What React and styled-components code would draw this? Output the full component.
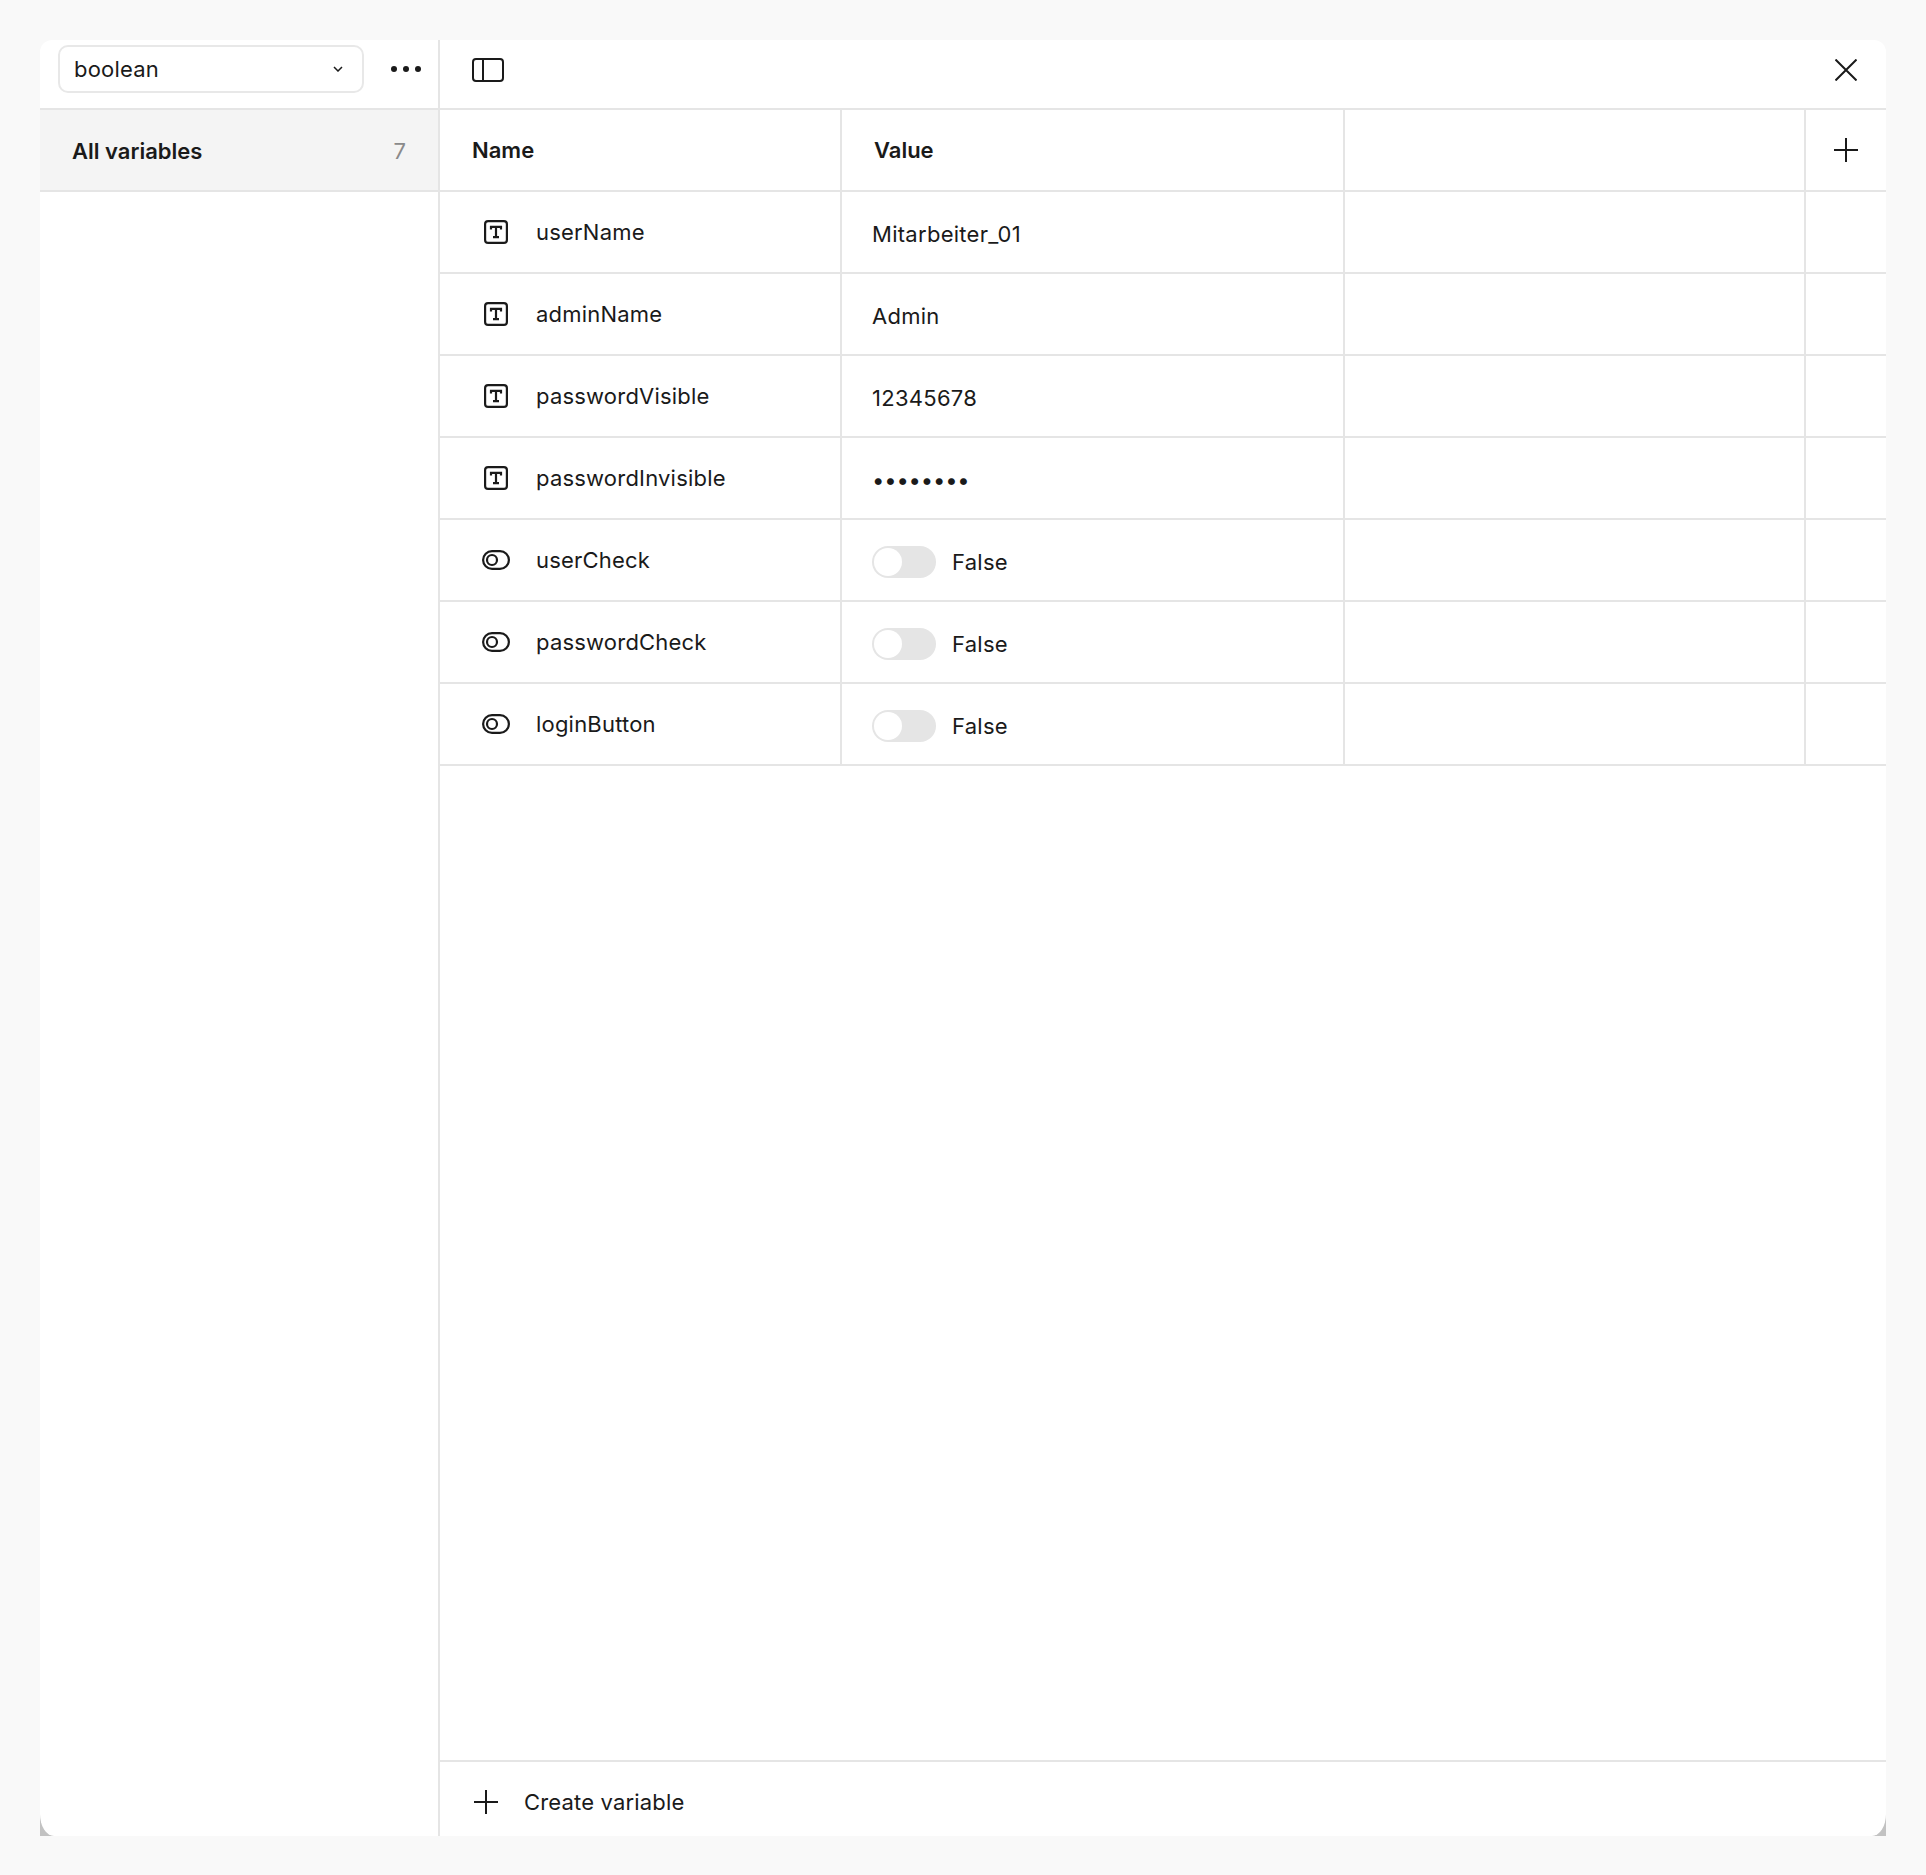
import React from 'react';
import styled, { createGlobalStyle } from 'styled-components';

const variables = [
    { name: 'userName', type: 'text', value: 'Mitarbeiter_01' },
    { name: 'adminName', type: 'text', value: 'Admin' },
    { name: 'passwordVisible', type: 'text', value: '12345678' },
    { name: 'passwordInvisible', type: 'password', value: '••••••••' },
    { name: 'userCheck', type: 'boolean', value: 'False' },
    { name: 'passwordCheck', type: 'boolean', value: 'False' },
    { name: 'loginButton', type: 'boolean', value: 'False' },
];

const TextIcon = () => (
    <svg width="24" height="24" viewBox="0 0 24 24" fill="none" stroke="#1a1a1a">
        <rect x="1.1" y="1.1" width="21.8" height="21.8" rx="3" strokeWidth="2.2" />
        <path d="M7 9.5V6.8h10v2.7M12 6.8v10.4M9 17.2h6" strokeWidth="2.2" />
    </svg>
);

const BooleanIcon = () => (
    <svg width="28" height="20" viewBox="0 0 28 20" fill="none" stroke="#1a1a1a" strokeWidth="2.2">
        <rect x="1.1" y="1.1" width="25.8" height="17.8" rx="8.9" />
        <circle cx="10" cy="10" r="5" />
    </svg>
);

const PlusIcon = () => (
    <svg width="24" height="24" viewBox="0 0 24 24" fill="none" stroke="#1a1a1a" strokeWidth="2">
        <path d="M0 12h24M12 0v24" />
    </svg>
);

export default function App() {
    return (
        <>
            <GlobalStyle />
            <Page>
                <Frame>
                    <Sidebar>
                        <SideHeader>
                            <Select>
                                boolean
                                <svg width="10" height="6" viewBox="0 0 10 6" fill="none" stroke="#1a1a1a" strokeWidth="1.5">
                                    <path d="M1 1l4 4 4-4" />
                                </svg>
                            </Select>
                            <Dots>
                                <i /><i /><i />
                            </Dots>
                        </SideHeader>
                        <Collection>
                            <span>All variables</span>
                            <Count>7</Count>
                        </Collection>
                    </Sidebar>
                    <Main>
                        <TopBar>
                            <svg width="32" height="24" viewBox="0 0 32 24" fill="none" stroke="#1a1a1a" strokeWidth="2">
                                <rect x="1" y="1" width="30" height="22" rx="3" />
                                <path d="M11 1v22" />
                            </svg>
                            <svg width="22" height="22" viewBox="0 0 22 22" fill="none" stroke="#1a1a1a" strokeWidth="2">
                                <path d="M0.5 0.5l21 21M21.5 0.5l-21 21" />
                            </svg>
                        </TopBar>
                        <Table>
                            <HeadCell>Name</HeadCell>
                            <HeadCell>Value</HeadCell>
                            <HeadCell />
                            <HeadCell $icon $last><PlusIcon /></HeadCell>
                            {variables.map((item) => (
                                <React.Fragment key={item.name}>
                                    <NameCell>
                                        <IconSlot>
                                            {item.type === 'boolean' ? <BooleanIcon /> : <TextIcon />}
                                        </IconSlot>
                                        {item.name}
                                    </NameCell>
                                    <ValueCell $masked={item.type === 'password'}>
                                        {item.type === 'boolean' && (
                                            <Toggle><Knob /></Toggle>
                                        )}
                                        {item.value}
                                    </ValueCell>
                                    <Cell />
                                    <Cell $last />
                                </React.Fragment>
                            ))}
                        </Table>
                        <Footer>
                            <PlusIcon />
                            Create variable
                        </Footer>
                    </Main>
                </Frame>
            </Page>
        </>
    );
}

const GlobalStyle = createGlobalStyle`
body {
    margin: 0;
    background: #f9f9f9;
    color: #1a1a1a;
    font-family: Inter, "Liberation Sans", sans-serif;
    font-size: 22px;
}
* {
    box-sizing: border-box;
}
`;

const Page = styled.div`
height: 1875px;
padding: 40px;
`;

const Frame = styled.div`
display: grid;
grid-template-columns: 400px 1fr;
height: 1796px;
border-radius: 12px 12px 0 0;
overflow: hidden;
background: linear-gradient(to bottom, transparent calc(100% - 24px), #c2c2c2 calc(100% - 24px));
`;

const Sidebar = styled.aside`
background: #fff;
border-right: 2px solid #e5e5e5;
border-bottom-left-radius: 14px 22px;
`;

const SideHeader = styled.div`
display: flex;
align-items: center;
gap: 27px;
height: 70px;
padding: 0 0 10px 18px;
border-bottom: 2px solid #e5e5e5;
`;

const Select = styled.div`
display: flex;
align-items: center;
justify-content: space-between;
width: 306px;
height: 48px;
padding: 0 19px 0 14px;
border: 2px solid #e8e8e8;
border-radius: 10px;
letter-spacing: 0.2px;
`;

const Dots = styled.div`
display: flex;
gap: 6px;
i {
    width: 6px;
    height: 6px;
    border-radius: 50%;
    background: #1a1a1a;
}
`;

const Collection = styled.div`
display: flex;
align-items: center;
justify-content: space-between;
height: 82px;
padding: 2px 32px 0;
background: #f4f4f4;
border-bottom: 2px solid #e5e5e5;
font-weight: 600;
`;

const Count = styled.span`
font-weight: 400;
color: #8a8a8a;
`;

const Main = styled.main`
display: flex;
flex-direction: column;
background: #fff;
border-bottom-right-radius: 14px 22px;
`;

const TopBar = styled.div`
display: flex;
align-items: center;
justify-content: space-between;
height: 70px;
padding: 0 29px 8px 32px;
border-bottom: 2px solid #e5e5e5;
`;

const Table = styled.div`
flex: 1;
display: grid;
grid-template-columns: 402px 503px 461px 80px;
grid-auto-rows: 82px;
align-content: start;
`;

const Cell = styled.div`
display: flex;
align-items: center;
border-bottom: 2px solid #e5e5e5;
border-right: ${(p) => (p.$last ? 'none' : '2px solid #e5e5e5')};
`;

const HeadCell = styled(Cell)`
justify-content: ${(p) => (p.$icon ? 'center' : 'flex-start')};
padding-left: ${(p) => (p.$icon ? 0 : '32px')};
font-weight: 600;
`;

const NameCell = styled(Cell)`
gap: 25px;
padding-left: 41px;
letter-spacing: 0.2px;
`;

const IconSlot = styled.span`
display: flex;
align-items: center;
justify-content: center;
width: 30px;
`;

const ValueCell = styled(Cell)`
gap: 16px;
padding: 4px 0 0 30px;
letter-spacing: ${(p) => (p.$masked ? '-0.18px' : '0.28px')};
`;

const Toggle = styled.span`
display: block;
width: 64px;
height: 32px;
padding: 2px;
border-radius: 16px;
background: #e5e5e5;
`;

const Knob = styled.span`
display: block;
width: 28px;
height: 28px;
border-radius: 50%;
background: #fff;
`;

const Footer = styled.div`
display: flex;
align-items: center;
gap: 26px;
height: 76px;
padding: 6px 0 0 34px;
border-top: 2px solid #e5e5e5;
letter-spacing: 0.17px;
`;
